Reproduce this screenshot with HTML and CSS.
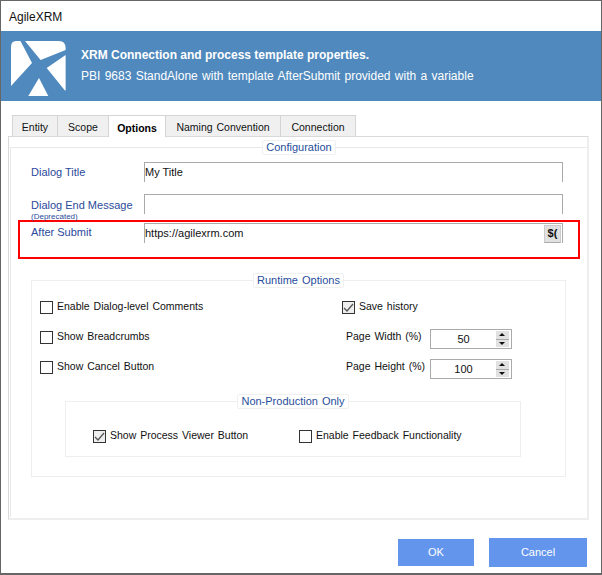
FILE: index.html
```html
<!DOCTYPE html>
<html lang="en">
<head>
  <meta charset="UTF-8">
  <meta name="viewport" content="width=device-width, initial-scale=1.0">
  <title>AgileXRM</title>
  <link rel="stylesheet" href="styles.css">
</head>
<body>
  <div class="window">
    <div class="titlebar">AgileXRM</div>

    <div class="banner">
      <svg class="logo" width="56" height="56" viewBox="0 0 56 56">
        <path fill="#fff" d="M14 0 L48 0 Q54.6 0 54.6 7 L54.6 9 L29.6 19 Z"/>
        <path fill="#fff" d="M9.500 0 L5 0 Q0 0 0 6 L0 45 L21 22 Z"/>
        <path fill="#fff" d="M35.700 27 L54.600 14 L54.600 49 Q54.600 50 53.500 49 Z"/>
        <path fill="#fff" d="M28 37 L17.300 55 L37.300 55 Z"/>
      </svg>
      <div>
        <div class="banner-title">XRM Connection and process template properties.</div>
        <div class="banner-sub">PBI 9683 StandAlone with template AfterSubmit provided with a variable</div>
      </div>
    </div>

    <div class="tabs">
      <div class="tab tab-entity">Entity</div>
      <div class="tab tab-scope">Scope</div>
      <div class="tab tab-options active">Options</div>
      <div class="tab tab-naming">Naming Convention</div>
      <div class="tab tab-connection">Connection</div>
    </div>

    <div class="panel">
      <fieldset class="group config">
        <legend>Configuration</legend>

        <div class="field field-title">
          <label>Dialog Title</label>
          <div class="textbox">My Title</div>
        </div>
        <div class="field field-end">
          <label>Dialog End Message<small>(Deprecated)</small></label>
          <div class="textbox"></div>
        </div>
        <div class="field field-submit">
          <label>After Submit</label>
          <div class="textbox">https://agilexrm.com<span class="var-btn">$(</span></div>
        </div>

        <fieldset class="group runtime">
          <legend>Runtime Options</legend>
          <div class="runtime-cols">
            <div class="col-left">
              <div class="check"><span class="box"></span>Enable Dialog-level Comments</div>
              <div class="check"><span class="box"></span>Show Breadcrumbs</div>
              <div class="check"><span class="box"></span>Show Cancel Button</div>
            </div>
            <div class="col-right">
              <div class="check"><span class="box checked"><svg width="11" height="11" viewBox="0 0 11 11"><path d="M1 6 L4 9 L10 2" fill="none" stroke="#555" stroke-width="1.3"/></svg></span>Save history</div>
              <div class="spin-row">
                <span class="spin-label">Page Width (%)</span>
                <div class="spinner"><span class="spin-val">50</span><span class="spin-btns"><i class="up"></i><i class="down"></i></span></div>
              </div>
              <div class="spin-row">
                <span class="spin-label">Page Height (%)</span>
                <div class="spinner"><span class="spin-val">100</span><span class="spin-btns"><i class="up"></i><i class="down"></i></span></div>
              </div>
            </div>
          </div>

          <fieldset class="group nonprod">
            <legend>Non-Production Only</legend>
            <div class="nonprod-row">
              <div class="check"><span class="box checked"><svg width="11" height="11" viewBox="0 0 11 11"><path d="M1 6 L4 9 L10 2" fill="none" stroke="#555" stroke-width="1.3"/></svg></span>Show Process Viewer Button</div>
              <div class="check"><span class="box"></span>Enable Feedback Functionality</div>
            </div>
          </fieldset>
        </fieldset>
      </fieldset>
    </div>

    <div class="footer">
      <button class="btn btn-ok">OK</button>
      <button class="btn btn-cancel">Cancel</button>
    </div>
  </div>
</body>
</html>
```

FILE: styles.css
```css
* {
  box-sizing: border-box;
}
body {
  margin: 0;
  font-family: "Liberation Sans", Arial, sans-serif;
  font-size: 12px;
  color: #111;
  background-color: #fff;
}
.window {
  width: 602px;
  height: 575px;
  border: 1px solid #666;
  border-bottom-width: 2px;
}
.titlebar {
  height: 30px;
  padding: 9px 0 0 8px;
  line-height: 14px;
}
.banner {
  height: 70px;
  background-color: #4f89bd;
  color: #fff;
  display: flex;
  align-items: flex-start;
  padding: 10px 0 0 10px;
  gap: 14px;
}
.banner-title {
  font-weight: bold;
  margin-top: 7px;
  line-height: 14px;
}
.banner-sub {
  margin-top: 7px;
  line-height: 14px;
  word-spacing: 1px;
}

/* tabs */
.tabs {
  display: flex;
  margin: 14px 0 0 11px;
  height: 21px;
  font-size: 10.5px;
  word-spacing: 1px;
}
.tab {
  height: 21px;
  padding-top: 4px;
  background-color: #f0f0f0;
  border: 1px solid #d4d4d4;
  border-bottom: 0;
  line-height: 14px;
  margin-right: -1px;
  text-align: center;
  white-space: nowrap;
}
.tab-entity { width: 46px; }
.tab-scope { width: 52px; }
.tab-options { width: 58px; }
.tab-naming { width: 116px; }
.tab-connection { width: 76px; }
.tab.active {
  background-color: #fff;
  color: #000;
  font-weight: bold;
  height: 22px;
  padding-top: 5px;
  position: relative;
  z-index: 1;
}

.panel {
  margin: 0 0 0 7px;
  width: 581px;
  height: 384px;
  border: 1px solid #d9d9d9;
  border-bottom: 2px solid #eee;
  border-right: 2px solid #eee;
  font-size: 10.5px;
  word-spacing: 1px;
}

/* group boxes */
.group {
  margin: 0;
  padding: 0;
  border: 1px solid #eee;
  min-width: 0;
}
.group legend {
  padding: 0 3px;
  margin: 0 auto;
  border: 1px solid #f0f0f0;
  border-radius: 2px;
  color: #1f4e9c;
  font-size: 11px;
  line-height: 13px;
  background-color: #fff;
}
.config {
  margin: 3px 0 0 1px;
  height: 377px;
  border-width: 1px 0 0 1px;
  border-color: #e8e8e8;
}
.field {
  display: flex;
  padding-left: 20px;
  font-size: 11px;
  word-spacing: 0;
}
.field label {
  width: 113px;
  color: #2b4a9b;
  line-height: 14px;
  padding-top: 3px;
}
.field label small {
  display: block;
  font-size: 8px;
  line-height: 9px;
}
.textbox {
  width: 419px;
  height: 20px;
  border: 1px solid #aaa;
  border-bottom: 0;
  padding: 2px 0 0;
  line-height: 14px;
  position: relative;
}
.field-title {
  margin-top: 7px;
}
.field-end {
  margin-top: 12px;
  height: 26px;
}
.field-end label {
  padding-top: 4px;
}
.field-submit {
  margin-left: 7px;
  width: 562px;
  height: 39px;
  padding: 1px 0 0 11px;
  border: 2px solid #f00;
}
.field-submit label {
  padding-top: 2px;
}
.var-btn {
  position: absolute;
  right: 1px;
  top: 1px;
  width: 17px;
  height: 18px;
  background-color: #e1e1e1;
  border: 1px solid #ccc;
  border-bottom-color: #aaa;
  font-weight: bold;
  text-align: center;
  line-height: 15px;
}
.runtime {
  margin: 14px 0 0 20px;
  width: 535px;
  height: 204px;
}
.runtime-cols {
  display: flex;
  padding: 13px 0 0 8px;
}
.col-left {
  width: 302px;
}
.check {
  display: flex;
  align-items: flex-start;
  height: 13px;
  line-height: 11px;
  margin-bottom: 17px;
  white-space: nowrap;
}
.box {
  width: 13px;
  height: 13px;
  border: 1px solid #333;
  margin-right: 4px;
  flex: none;
  display: flex;
  align-items: center;
  justify-content: center;
  background-color: #fff;
}
.box.checked {
  background-color: #eee;
}
.col-right .check {
  margin-bottom: 15px;
}
.spin-row {
  display: flex;
  align-items: center;
  height: 20px;
  margin-bottom: 10px;
  margin-left: 4px;
}
.spin-label {
  width: 84px;
  padding-bottom: 7px;
  white-space: nowrap;
}
.spinner {
  width: 82px;
  height: 20px;
  border: 1px solid #aaa;
  display: flex;
  align-items: center;
}
.spin-val {
  flex: 1;
  text-align: center;
  font-size: 11px;
}
.spin-btns {
  width: 13px;
  height: 16px;
  display: flex;
  flex-direction: column;
  margin-right: 2px;
}
.spin-btns i {
  flex: 1;
  background-color: #e1e1e1;
  position: relative;
}
.spin-btns .up {
  border-bottom: 1px solid #aaa;
}
.spin-btns i::after {
  content: "";
  position: absolute;
  left: 3px;
  top: 2px;
  border-left: 3px solid transparent;
  border-right: 3px solid transparent;
}
.spin-btns .up::after {
  border-bottom: 3px solid #111;
}
.spin-btns .down::after {
  border-top: 3px solid #111;
}
.nonprod {
  margin: 3px 0 0 33px;
  width: 456px;
  height: 63px;
}
.nonprod-row {
  display: flex;
  padding: 21px 0 0 27px;
}
.nonprod-row .check:first-child {
  width: 206px;
}

/* bottom buttons */
.footer {
  display: flex;
  justify-content: flex-end;
  align-items: center;
  gap: 15px;
  padding: 18px 14px 0 0;
}
.btn {
  border: 0;
  background-color: #6495ed;
  color: #fff;
  font-family: inherit;
  font-size: 11px;
  padding: 0 0 2px;
}
.btn-ok {
  width: 76px;
  height: 27px;
}
.btn-cancel {
  width: 98px;
  height: 29px;
}
```
